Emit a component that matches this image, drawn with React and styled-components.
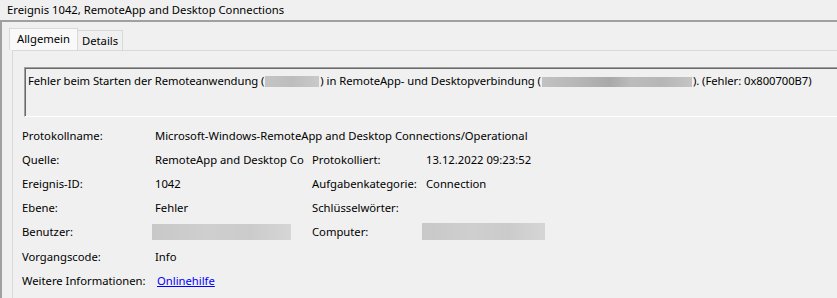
import React from 'react';
import styled, { createGlobalStyle } from 'styled-components';

const GlobalStyle = createGlobalStyle`
    html, body {
        margin: 0;
        padding: 0;
        background: #f0f0f0;
    }
    body {
        font-family: "Noto Sans", "Open Sans", sans-serif;
        font-size: 11.25px;
        color: #000;
    }
`;

const Window = styled.div`
    width: 837px;
    height: 298px;
    overflow: hidden;
    background: #f0f0f0;
    display: flex;
    flex-direction: column;
`;

const TitleBar = styled.div`
    height: 20px;
    line-height: 20px;
    padding-left: 7px;
    white-space: nowrap;
`;

const Panel = styled.div`
    flex: 1;
    border-top: 2px solid #a0a0a0;
    border-left: 2px solid #a0a0a0;
    padding-top: 6px;
    display: flex;
    flex-direction: column;
`;

const TabList = styled.div`
    display: flex;
    align-items: flex-end;
    padding-left: 7px;
    height: 22px;
`;

const Tab = styled.div`
    box-sizing: border-box;
    width: ${p => p.$w}px;
    height: ${p => (p.$active ? '22px' : '20px')};
    padding-left: ${p => (p.$active ? '7px' : '4px')};
    line-height: 19px;
    background: ${p => (p.$active ? '#f9f9f9' : '#f0f0f0')};
    border: 1px solid #d9d9d9;
    border-bottom: none;
    ${p => (p.$active ? '' : 'border-left: none;')}
    white-space: nowrap;
`;

const Pane = styled.div`
    flex: 1;
    margin-left: 10px;
    border-top: 1px solid #d9d9d9;
    border-left: 1px solid #d9d9d9;
    padding: 16px 0 0 11px;
`;

const MessageBox = styled.div`
    height: 43px;
    margin-right: -20px;
    border-top: 1px solid #a0a0a0;
    border-left: 1px solid #a0a0a0;
    border-bottom: 1px solid #ffffff;
    box-shadow: inset 1px 1px 0 #696969;
    padding: 5px 0 0 3px;
    white-space: nowrap;
    line-height: 16px;
    letter-spacing: -0.05px;
`;

const Blur = styled.span`
    display: inline-block;
    width: ${p => p.$w}px;
    height: ${p => p.$h}px;
    margin: 0 ${p => p.$gap || 0}px;
    vertical-align: middle;
    background: ${p => p.$bg};
`;

const Details = styled.div`
    margin: 6px 0 0 -2px;
    display: grid;
    grid-template-columns: 133px 157px 114px 1fr;
    grid-auto-rows: 24.2px;
    align-items: center;
    white-space: nowrap;
`;

const Label = styled.div``;

const Value = styled.div`
    overflow: hidden;
    max-width: ${p => (p.$span ? 'none' : '150px')};
    grid-column: ${p => (p.$span ? 'span 3' : 'auto')};
    margin-left: ${p => p.$nudge || 0}px;
    display: flex;
    align-items: center;
`;

const Link = styled.a`
    color: #0000ff;
    text-decoration: underline;
    margin-left: 2px;
`;

const lightBlur = 'linear-gradient(90deg, #c8c8c8 0%, #cfcfcf 40%, #cbcbcb 70%, #d6d6d6 100%)';
const darkBlur = 'linear-gradient(90deg, #c2c2c2 0%, #b3b3b3 30%, #a9a9a9 45%, #bcbcbc 60%, #b6b6b6 80%, #c4c4c4 100%)';

export default function App() {
    return (
        <>
            <GlobalStyle />
            <Window>
                <TitleBar>Ereignis 1042, RemoteApp and Desktop Connections</TitleBar>
                <Panel>
                    <TabList>
                        <Tab $active $w={69}>Allgemein</Tab>
                        <Tab $w={45}>Details</Tab>
                    </TabList>
                    <Pane>
                        <MessageBox>
                            Fehler beim Starten der Remoteanwendung (
                            <Blur $w={54} $h={11} $gap={1} $bg="linear-gradient(90deg, #c4c4c4, #bdbdbd 50%, #c9c9c9)" />
                            ) in RemoteApp- und Desktopverbindung (
                            <Blur $w={150} $h={10} $gap={1} $bg={darkBlur} />
                            ). (Fehler: 0x800700B7)
                        </MessageBox>
                        <Details>
                            <Label>Protokollname:</Label>
                            <Value $span>Microsoft-Windows-RemoteApp and Desktop Connections/Operational</Value>

                            <Label>Quelle:</Label>
                            <Value>RemoteApp and Desktop Co</Value>
                            <Label>Protokolliert:</Label>
                            <Value>13.12.2022 09:23:52</Value>

                            <Label>Ereignis-ID:</Label>
                            <Value>1042</Value>
                            <Label>Aufgabenkategorie:</Label>
                            <Value>Connection</Value>

                            <Label>Ebene:</Label>
                            <Value>Fehler</Value>
                            <Label>Schlüsselwörter:</Label>
                            <Value></Value>

                            <Label>Benutzer:</Label>
                            <Value $nudge={-3}><Blur $w={139} $h={16} $bg={lightBlur} /></Value>
                            <Label>Computer:</Label>
                            <Value $nudge={-4}><Blur $w={123} $h={17} $bg={lightBlur} /></Value>

                            <Label>Vorgangscode:</Label>
                            <Value $span>Info</Value>

                            <Label>Weitere Informationen:</Label>
                            <Value $span><Link href="#">Onlinehilfe</Link></Value>
                        </Details>
                    </Pane>
                </Panel>
            </Window>
        </>
    );
}
